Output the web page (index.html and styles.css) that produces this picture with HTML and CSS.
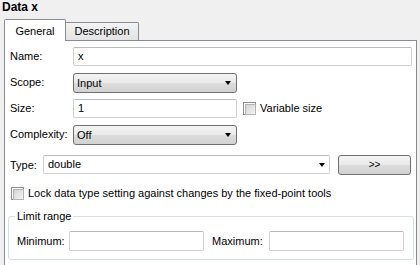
FILE: index.html
```html
<!DOCTYPE html>
<html lang="en">

<head>
    <meta charset="UTF-8">
    <meta name="viewport" content="width=device-width, initial-scale=1.0">
    <title>Data x</title>
    <link rel="stylesheet" href="styles.css">
</head>

<body>
    <div class="title">Data x</div>
    <div class="tabs">
        <div class="tab active">General</div>
        <div class="tab">Description</div>
    </div>
    <div class="panel">
        <div class="row">
            <div class="label">Name:</div>
            <div class="field wide">x</div>
        </div>
        <div class="row">
            <div class="label">Scope:</div>
            <div class="select">Input<span class="arrow"></span></div>
        </div>
        <div class="row">
            <div class="label">Size:</div>
            <div class="field short">1</div>
            <span class="check"></span>
            <span class="check-text">Variable size</span>
        </div>
        <div class="row">
            <div class="label">Complexity:</div>
            <div class="select">Off<span class="arrow"></span></div>
        </div>
        <div class="type-row">
            <div class="type-label">Type:</div>
            <div class="field combo">double<span class="arrow"></span></div>
            <div class="button">&gt;&gt;</div>
        </div>
        <div class="lock-row">
            <span class="check"></span>
            <span class="check-text">Lock data type setting against changes by the fixed-point tools</span>
        </div>
        <fieldset class="group">
            <legend>Limit range</legend>
            <div class="range-row">
                <div class="min-label">Minimum:</div>
                <div class="field range"></div>
                <div class="max-label">Maximum:</div>
                <div class="field range"></div>
            </div>
        </fieldset>
    </div>
</body>

</html>
```

FILE: styles.css
```css
* {
    padding: 0;
    margin: 0;
    box-sizing: border-box;
}

body {
    background-color: #f0f0f0;
    font-family: "Liberation Sans", Arial, sans-serif;
    font-size: 11px;
    color: #000;
    overflow: hidden;
}

.title {
    height: 20px;
    line-height: 15px;
    padding-left: 2px;
    font-size: 12px;
    font-weight: bold;
}

.tabs {
    display: flex;
    align-items: flex-end;
    margin-left: 4px;
    height: 20px;
}

.tab {
    width: 73px;
    height: 18px;
    border: 1px solid #898c95;
    border-left: none;
    border-bottom: none;
    border-radius: 0 2px 0 0;
    background: linear-gradient(#f3f3f3, #e3e3e3);
    text-align: center;
    line-height: 17px;
}

.tab.active {
    width: 62px;
    height: 22px;
    border-left: 1px solid #898c95;
    border-radius: 2px 2px 0 0;
    background: #fff;
    margin-bottom: -1px;
    position: relative;
    line-height: 22px;
}

.panel {
    margin: 0 3px 0 4px;
    height: 230px;
    border: 1px solid #898c95;
    border-bottom: none;
    background: #fff;
    padding: 6px 4px 0 5px;
}

.row {
    display: flex;
    align-items: center;
    height: 26px;
    align-items: flex-start;
}

.label {
    width: 63px;
    line-height: 19px;
}

.field {
    height: 19px;
    line-height: 17px;
    border: 1px solid #d0d0d0;
    border-top-color: #b8b9bd;
    border-radius: 2px;
    padding-left: 4px;
    background: #fff;
    position: relative;
}

.field.wide {
    width: 339px;
}

.field.short {
    width: 164px;
}

.select {
    width: 164px;
    height: 20px;
    line-height: 18px;
    border: 1px solid #707070;
    border-radius: 3px;
    padding-left: 3px;
    background: linear-gradient(#f4f4f4, #e9e9e9 50%, #dcdcdc 51%, #d2d2d2);
    position: relative;
}

.arrow {
    position: absolute;
    right: 5px;
    top: 7px;
    width: 0;
    height: 0;
    border-left: 3.5px solid transparent;
    border-right: 3.5px solid transparent;
    border-top: 4px solid #000;
}

.check {
    width: 13px;
    height: 13px;
    border: 1px solid #8e8f8f;
    padding: 1px;
    background: #fff;
    display: inline-block;
    position: relative;
}

.check::after {
    content: "";
    display: block;
    width: 9px;
    height: 9px;
    border: 1px solid #b4b4b4;
    background: linear-gradient(135deg, #d2d4d8, #f4f4f4);
}

.row .check {
    margin: 3px 0 0 6px;
}

.check-text {
    margin-left: 4px;
    line-height: 19px;
}

.type-row {
    display: flex;
    align-items: center;
    margin-top: 3px;
    height: 21px;
}

.type-label {
    width: 33px;
}

.field.combo {
    width: 287px;
    height: 19px;
}

.field.combo .arrow {
    right: 4px;
    top: 7px;
}

.button {
    width: 73px;
    height: 20px;
    margin-left: 8px;
    margin-top: 1px;
    border: 1px solid #707070;
    border-radius: 3px;
    background: linear-gradient(#f4f4f4, #e9e9e9 50%, #dcdcdc 51%, #d2d2d2);
    text-align: center;
    line-height: 18px;
    font-size: 10px;
}

.lock-row {
    display: flex;
    align-items: center;
    margin-top: 11px;
    height: 14px;
    padding-left: 1px;
}

.lock-row .check-text {
    margin-left: 4px;
    line-height: 14px;
}

.group {
    margin: 10px -1px 0 -2px;
    border: 1px solid #d5dfe5;
    border-radius: 3px;
    padding: 8px 9px 5px 8px;
    height: 50px;
}

.group legend {
    margin-left: -2px;
    padding: 0 2px;
    line-height: 13px;
}

.range-row {
    display: flex;
    align-items: center;
}

.min-label {
    width: 52px;
}

.max-label {
    width: 57px;
    margin-left: 8px;
}

.field.range {
    width: 135px;
    height: 20px;
}
```
